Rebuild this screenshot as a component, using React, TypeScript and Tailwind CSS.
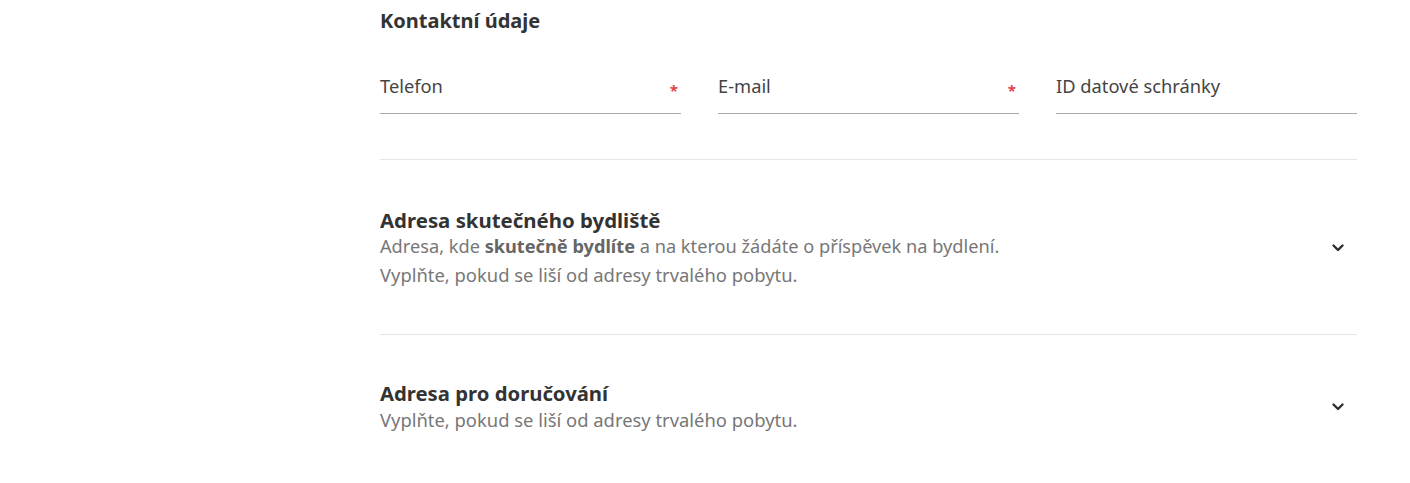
import React from "react";

function Field({ label, required }: { label: string; required?: boolean }) {
  return (
    <div className="flex items-center justify-between border-b border-[#a9a9a9] pb-[15px]">
      <span className="text-[18.3px] leading-[24px] text-[#444]">{label}</span>
      {required && <span className="mr-[3px] translate-y-[4px] text-[15px] font-bold leading-[16px] text-[#e0434f]">*</span>}
    </div>
  );
}

function Chevron() {
  return (
    <svg width="14" height="10" viewBox="0 0 14 10" className="mr-[12px]">
      <path d="M2.5 2.5 L7 7 L11.5 2.5" fill="none" stroke="#2d2d2d" strokeWidth="2.4" strokeLinecap="round" strokeLinejoin="round" />
    </svg>
  );
}

export default function App() {
  return (
    <div className="min-h-[483px] w-[1410px] bg-white" style={{ fontFamily: "'Noto Sans', sans-serif" }}>
      <div className="ml-[380px] w-[977px]">
        <h2 className="pt-[8px] text-[20px] font-bold leading-[26px] text-[#333]">Kontaktní údaje</h2>
        <div className="mt-[40px] grid grid-cols-3 gap-x-[37px]">
          <Field label="Telefon" required />
          <Field label="E-mail" required />
          <Field label="ID datové schránky" />
        </div>
        <div className="mt-[45px] border-t border-[#e6e6e6]" />
        <div className="flex items-center justify-between pt-[47px] pb-[45px]">
          <div>
            <h3 className="text-[20.4px] font-bold leading-[26px] text-[#333]">Adresa skutečného bydliště</h3>
            <p className="text-[18.2px] leading-[27px] text-[#777]">
              Adresa, kde <b className="font-bold text-[#666]">skutečně bydlíte</b> a na kterou žádáte o příspěvek na bydlení.
            </p>
            <p className="text-[18.4px] leading-[29px] text-[#777]">Vyplňte, pokud se liší od adresy trvalého pobytu.</p>
          </div>
          <Chevron />
        </div>
        <div className="border-t border-[#e6e6e6]" />
        <div className="flex items-center justify-between pt-[45px]">
          <div>
            <h3 className="text-[20.3px] font-bold leading-[26px] text-[#333]">Adresa pro doručování</h3>
            <p className="text-[18.4px] leading-[27px] text-[#777]">Vyplňte, pokud se liší od adresy trvalého pobytu.</p>
          </div>
          <Chevron />
        </div>
      </div>
    </div>
  );
}
